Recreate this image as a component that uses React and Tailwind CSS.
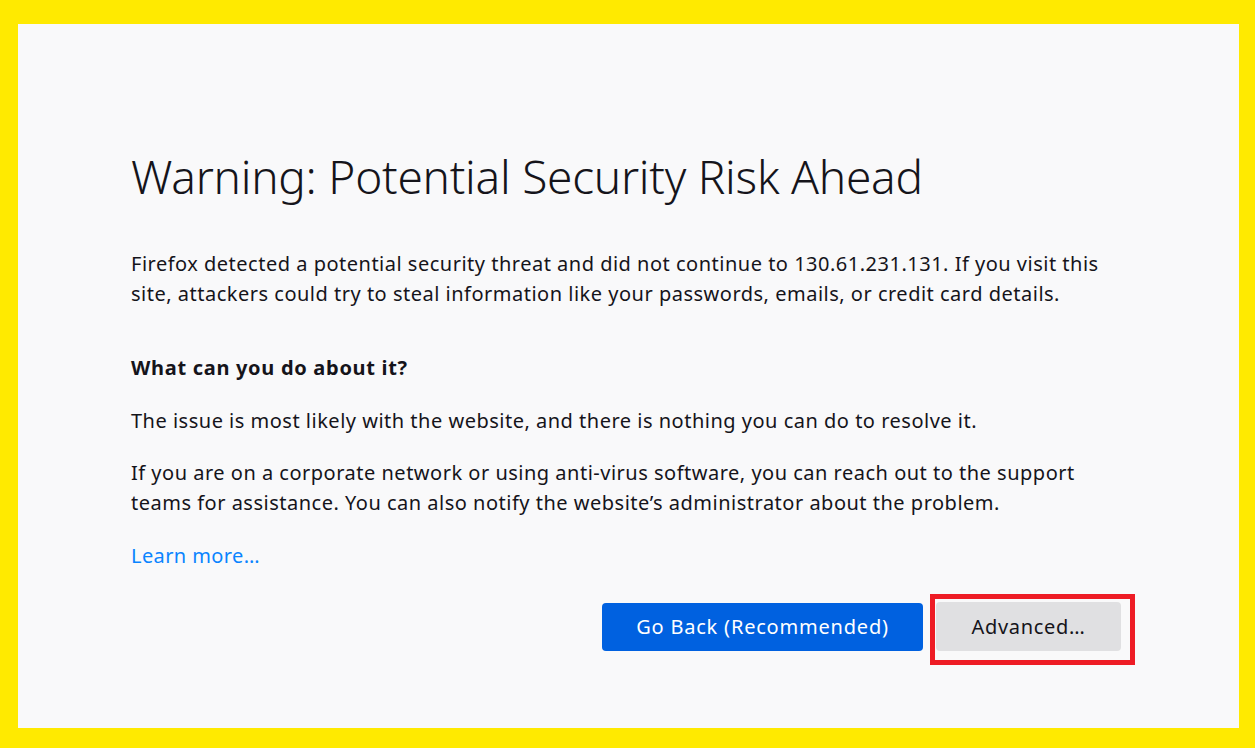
export default function App() {
  const font = { fontFamily: '"Noto Sans", "Open Sans", sans-serif' };
  return (
    <div className="w-[1255px] h-[748px] bg-[#ffea00] pt-[24px] pl-[18px] pr-[16px] pb-[20px]" style={font}>
      <div className="w-full h-full bg-[#f9f9fa] pl-[113px] pr-[104px] pt-[122px] text-[#15141a]">
        <h1 className="text-[46px] font-light leading-[60px] tracking-[-0.25px]">Warning: Potential Security Risk Ahead</h1>
        <p className="mt-[43px] text-[20px] leading-[30px] tracking-[0.5px]">
          Firefox detected a potential security threat and did not continue to 130.61.231.131. If you visit this<br />site, attackers could try to steal information like your passwords, emails, or credit card details.
        </p>
        <h2 className="mt-[44px] text-[20px] leading-[30px] font-bold tracking-[0.7px]">What can you do about it?</h2>
        <p className="mt-[23px] text-[20px] leading-[30px] tracking-[0.5px]">The issue is most likely with the website, and there is nothing you can do to resolve it.</p>
        <p className="mt-[22px] text-[20px] leading-[30px] tracking-[0.5px]">
          If you are on a corporate network or using anti-virus software, you can reach out to the support<br />teams for assistance. You can also notify the website’s administrator about the problem.
        </p>
        <p className="mt-[23px] text-[20px] leading-[30px] text-[#0a84ff] tracking-[0.4px]">Learn more…</p>
        <div className="mt-[23px] flex justify-end items-start">
          <button className="mt-[9px] w-[321px] h-[48px] bg-[#0061e0] text-white text-[20px] tracking-[0.8px] rounded-[4px]">Go Back (Recommended)</button>
          <div className="ml-[7px] border-[5px] border-[#ee1c25] pt-[3px] pl-[1px] pr-[9px] pb-[9px]">
            <button className="w-[185px] h-[49px] bg-[#e0e0e2] text-[#15141a] text-[20px] tracking-[0.7px] rounded-[4px]">Advanced…</button>
          </div>
        </div>
      </div>
    </div>
  );
}
